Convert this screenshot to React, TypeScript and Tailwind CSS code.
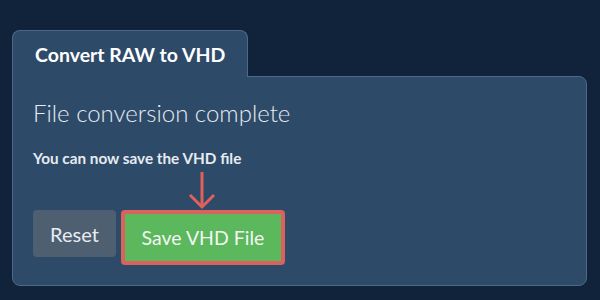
export default function App() {
  return (
    <div className="w-[600px] h-[300px] bg-[#11233a] pt-[30px] pl-[12px] pr-[13px] font-['Lato','Noto_Sans',sans-serif]">
      {/* Tab */}
      <div className="relative z-10 -mb-px w-[236px] h-[47px] bg-[#2e4a69] border border-b-0 border-[#4d6888] rounded-t-[8px] flex items-center pl-[22px] pt-[2px]">
        <span className="text-[19.5px] font-bold text-white leading-none">Convert RAW to VHD</span>
      </div>

      {/* Panel */}
      <div className="h-[210px] bg-[#2e4a69] border border-[#4d6888] rounded-b-[8px] rounded-tr-[8px] pl-[20px] pt-[21px]">
        <h2 className="text-[24px] font-light leading-[30px] text-[#e6ebf0]">File conversion complete</h2>
        <p className="mt-[20px] text-[15.3px] font-bold leading-[20px] text-[#e6ebf0]">You can now save the VHD file</p>

        <div className="h-[42px] pl-[155px] pt-[2px]">
          <svg width="28" height="40" viewBox="0 0 28 40" fill="none" stroke="#e0605a" strokeWidth="3">
            <path d="M14 2 V36" />
            <path d="M2 25 L14 37 L26 25" />
          </svg>
        </div>

        <div className="flex items-start gap-[5px]">
          <button className="w-[83px] h-[47px] rounded-[4px] bg-[#4e5f72] text-[20px] text-[#e8ecf0] leading-none">Reset</button>
          <button className="w-[164px] h-[55px] rounded-[4px] border-[4px] border-[#db615d] bg-[#5cb85c] text-[19.5px] text-[#f2f6f2] leading-none">Save VHD File</button>
        </div>
      </div>
    </div>
  )
}
